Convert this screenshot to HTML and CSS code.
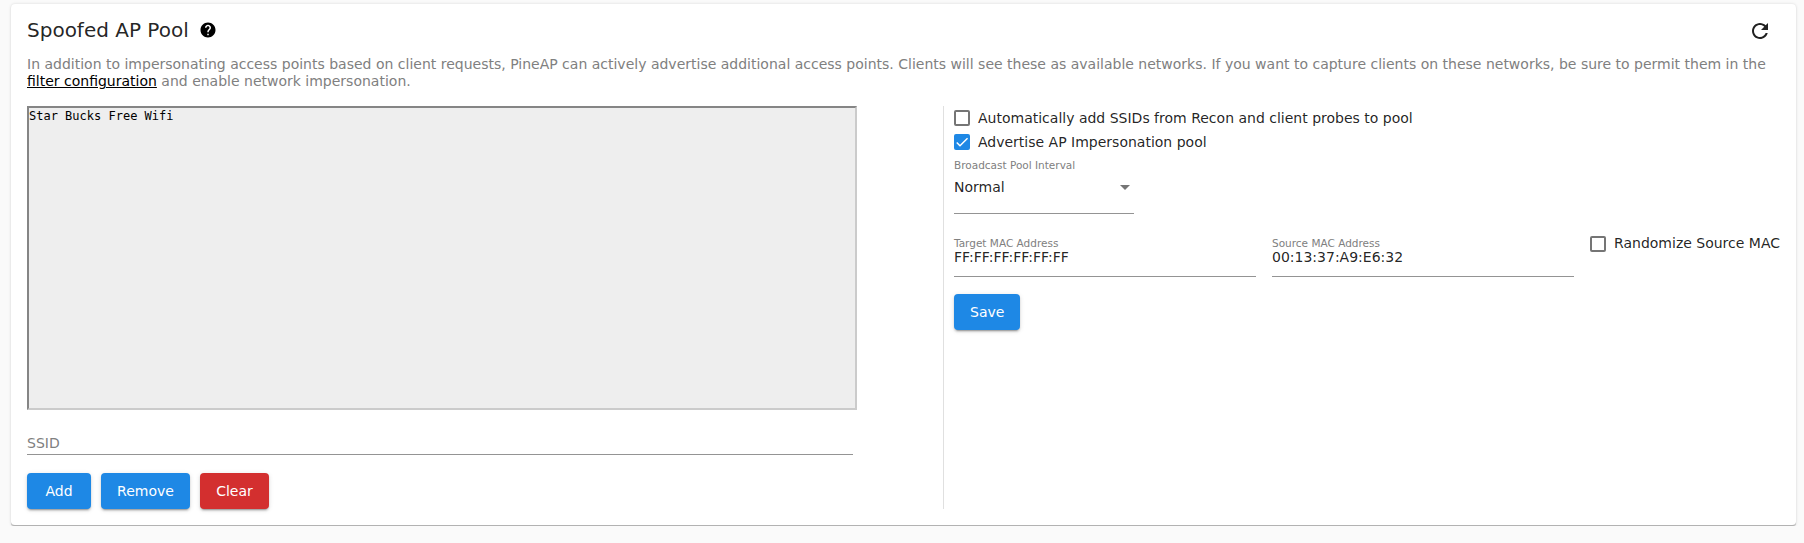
FILE: index.html
```html
<!DOCTYPE html>
<html lang="en">
<head>
<meta charset="utf-8">
<title>Spoofed AP Pool</title>
<link rel="stylesheet" href="styles.css">
</head>
<body>
<main class="card">
  <header class="card-header">
    <h1 class="title">Spoofed AP Pool</h1>
    <svg class="help-icon" viewBox="0 0 24 24"><path d="M12 2C6.480 2 2 6.480 2 12s4.480 10 10 10 10-4.480 10-10S17.520 2 12 2zm1 17h-2v-2h2v2zm2.070-7.750l-.9.920C13.450 12.900 13 13.500 13 15h-2v-.5c0-1.100.45-2.100 1.170-2.830l1.240-1.260c.37-.36.59-.86.59-1.410 0-1.100-.9-2-2-2s-2 .9-2 2H8c0-2.210 1.790-4 4-4s4 1.790 4 4c0 .88-.36 1.680-.93 2.250z"/></svg>
    <svg class="refresh-icon" viewBox="0 0 24 24"><path d="M17.650 6.350C16.200 4.900 14.210 4 12 4c-4.420 0-7.990 3.580-7.990 8s3.570 8 7.990 8c3.730 0 6.840-2.550 7.730-6h-2.080c-.82 2.330-3.040 4-5.650 4-3.310 0-6-2.690-6-6s2.690-6 6-6c1.660 0 3.140.69 4.220 1.780L13 11h7V4l-2.350 2.350z"/></svg>
  </header>
  <p class="description">In addition to impersonating access points based on client requests, PineAP can actively advertise additional access points. Clients will see these as available networks. If you want to capture clients on these networks, be sure to permit them in the <a class="link">filter configuration</a> and enable network impersonation.</p>
  <div class="columns">
    <section class="pool">
      <div class="pool-list">Star Bucks Free Wifi</div>
      <div class="ssid-field">SSID</div>
      <div class="actions">
        <button class="button button-add">Add</button>
        <button class="button button-remove">Remove</button>
        <button class="button button-warn">Clear</button>
      </div>
    </section>
    <section class="settings">
      <label class="check"><span class="box"></span>Automatically add SSIDs from Recon and client probes to pool</label>
      <label class="check"><span class="box box-checked"><svg class="tick" viewBox="0 0 24 24"><path d="M4.100 12.700 9 17.600 20.300 6.300"/></svg></span>Advertise AP Impersonation pool</label>
      <div class="select-field">
        <div class="field-label">Broadcast Pool Interval</div>
        <div class="select-value"><span>Normal</span><span class="arrow"></span></div>
      </div>
      <div class="mac-row">
        <div class="mac-field">
          <div class="field-label">Target MAC Address</div>
          <div class="mac-value">FF:FF:FF:FF:FF:FF</div>
        </div>
        <div class="mac-field">
          <div class="field-label">Source MAC Address</div>
          <div class="mac-value">00:13:37:A9:E6:32</div>
        </div>
        <label class="check"><span class="box"></span><span class="random-text">Randomize Source MAC</span></label>
      </div>
      <button class="button">Save</button>
    </section>
  </div>
</main>
</body>
</html>
```
FILE: styles.css
```css
* {
  box-sizing: border-box;
}

body {
  margin: 0;
  padding: 4px 8px 0 11px;
  background: #fafafa;
  color: rgba(0, 0, 0, 0.87);
  font: 14px/17px "DejaVu Sans", sans-serif;
}

.card {
  height: 522px;
  padding: 14px 16px 16px;
  border-bottom: 1px solid #b2b2b2;
  border-radius: 4px;
  background: #fff;
  box-shadow: 0 1px 1px rgba(0, 0, 0, 0.14), 0 0 3px rgba(0, 0, 0, 0.14);
}

.card-header {
  display: flex;
  align-items: center;
  height: 24px;
  padding-right: 8px;
}

.title {
  margin: 0 10px 0 0;
  font-size: 20px;
  font-weight: 400;
  line-height: 24px;
}

.help-icon {
  width: 18px;
  height: 18px;
  fill: #000;
}

.refresh-icon {
  width: 24px;
  height: 24px;
  margin: 2px 0 0 auto;
  fill: rgba(0, 0, 0, 0.87);
}

.description {
  margin: 14px 0 16px;
  color: #808080;
}

.link {
  color: #000;
  text-decoration: underline;
}

.columns {
  display: flex;
  height: 403px;
}

.pool {
  width: 916px;
}

.pool-list {
  width: 830px;
  height: 304px;
  padding: 1px 0;
  border: 2px solid;
  border-color: #858585 #cbcbcb #cbcbcb #858585;
  background: #eee;
  color: #000;
  font: 12px/14px "DejaVu Sans Mono", monospace;
}

.ssid-field {
  width: 826px;
  height: 45px;
  padding-top: 25px;
  border-bottom: 1px solid #949494;
  color: #808080;
}

.actions {
  display: flex;
  gap: 10px;
  margin-top: 18px;
}

.button {
  height: 36px;
  padding: 0 16px;
  border: 0;
  border-radius: 4px;
  background: #1e88e5;
  color: #fff;
  font: 14px/36px "DejaVu Sans", sans-serif;
  box-shadow: 0 3px 1px -2px rgba(0, 0, 0, 0.2), 0 2px 2px rgba(0, 0, 0, 0.14), 0 1px 5px rgba(0, 0, 0, 0.12);
}

.button-add {
  width: 64px;
}

.button-remove {
  width: 89px;
}

.button-warn {
  width: 69px;
  background: #d32f2f;
}

.settings {
  flex: 1;
  padding-left: 10px;
  border-left: 1px solid #e0e0e0;
}

.check {
  display: flex;
  align-items: center;
  gap: 8px;
  height: 24px;
  white-space: nowrap;
}

.random-text {
  padding-bottom: 2px;
}

.box {
  flex: none;
  width: 16px;
  height: 16px;
  border: 2px solid #757575;
  border-radius: 2px;
}

.box-checked {
  border: 0;
  background: #1e88e5;
}

.tick {
  display: block;
  width: 16px;
  height: 16px;
  fill: none;
  stroke: #fff;
  stroke-width: 2.200;
}

.select-field {
  width: 180px;
  height: 60px;
  padding-top: 4px;
  border-bottom: 1px solid #949494;
}

.field-label {
  color: #808080;
  font-size: 10.500px;
  line-height: 14px;
}

.select-value {
  display: flex;
  align-items: center;
  justify-content: space-between;
  padding: 7px 4px 0 0;
}

.arrow {
  border: 5px solid transparent;
  border-top-color: #757575;
  border-bottom: 0;
}

.mac-row {
  display: flex;
  gap: 16px;
  margin: 18px 0 17px;
}

.mac-field {
  flex: 1;
  height: 45px;
  padding-top: 4px;
  border-bottom: 1px solid #949494;
}

.mac-value {
  line-height: 15px;
}
```
